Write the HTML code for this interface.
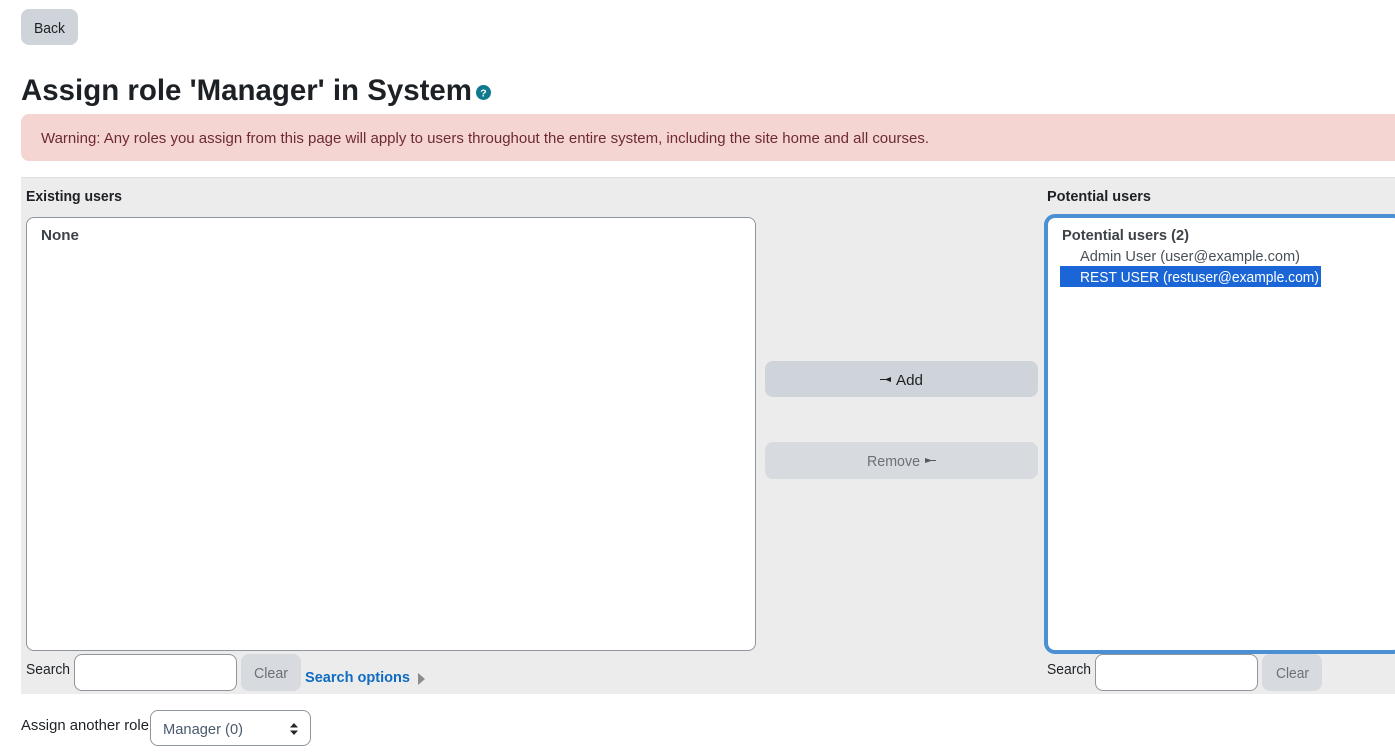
<!DOCTYPE html>
<html><head><meta charset="utf-8"><title>Assign role</title>
<style>
html,body{margin:0;padding:0;width:1395px;height:753px;overflow:hidden;background:#fff}
.b{position:absolute;box-sizing:border-box}
svg{position:absolute;left:0;top:0}
text{font-family:"Liberation Sans",sans-serif;font-size:15px;fill:#1d2125}
.bd{font-weight:700}
</style></head><body>
<div class="b" style="left:21px;top:9px;width:57px;height:36px;background:#ced4da;border-radius:8px"></div>
<div class="b" style="left:21px;top:114px;width:1374px;height:47px;background:#f5d5d1;border-radius:8px 0 0 8px"></div>
<div class="b" style="left:21px;top:177px;width:1374px;height:517px;background:#ececec;border-top:1px solid #dedede"></div>
<div class="b" style="left:26px;top:217px;width:730px;height:434px;background:#fff;border:1px solid #8f959e;border-radius:8px"></div>
<div class="b" style="left:1044px;top:214px;width:360px;height:440px;background:#fff;border:4px solid #4a90d3;border-radius:11px"></div>
<div class="b" style="left:1060px;top:266px;width:261px;height:21px;background:#1a66d6"></div>
<div class="b" style="left:765px;top:361px;width:273px;height:36px;background:#ced4da;border-radius:8px"></div>
<div class="b" style="left:765px;top:442px;width:273px;height:37px;background:#d7dbe0;border-radius:8px"></div>
<div class="b" style="left:74px;top:654px;width:163px;height:37px;background:#fff;border:1px solid #8f959e;border-radius:8px"></div>
<div class="b" style="left:241px;top:654px;width:60px;height:37px;background:#d7dbe0;border-radius:8px"></div>
<div class="b" style="left:1095px;top:654px;width:163px;height:37px;background:#fff;border:1px solid #8f959e;border-radius:8px"></div>
<div class="b" style="left:1262px;top:654px;width:60px;height:37px;background:#d7dbe0;border-radius:8px"></div>
<div class="b" style="left:150px;top:710px;width:161px;height:36px;background:#fff;border:1px solid #8f959e;border-radius:8px"></div>
<svg width="1395" height="753" viewBox="0 0 1395 753">
<text x="34" y="33" textLength="31" lengthAdjust="spacingAndGlyphs">Back</text>
<text x="21" y="100" class="bd" style="font-size:30px" textLength="451" lengthAdjust="spacingAndGlyphs">Assign role 'Manager' in System</text>
<circle cx="483.500" cy="92.500" r="7.500" fill="#0f7a8e"/>
<text x="483.500" y="96.500" class="bd" style="font-size:10.500px;fill:#fff" text-anchor="middle">?</text>
<text x="41" y="143" style="fill:#6e2a33" textLength="888" lengthAdjust="spacingAndGlyphs">Warning: Any roles you assign from this page will apply to users throughout the entire system, including the site home and all courses.</text>
<text x="26" y="201" class="bd" textLength="96" lengthAdjust="spacingAndGlyphs">Existing users</text>
<text x="1047" y="201" class="bd" textLength="104" lengthAdjust="spacingAndGlyphs">Potential users</text>
<text x="41" y="240" class="bd" style="fill:#3d4248" textLength="38" lengthAdjust="spacingAndGlyphs">None</text>
<text x="1062" y="240" class="bd" style="fill:#3d4248" textLength="127" lengthAdjust="spacingAndGlyphs">Potential users (2)</text>
<text x="1080" y="261" style="fill:#495057" textLength="220" lengthAdjust="spacingAndGlyphs">Admin User (user@example.com)</text>
<text x="1080" y="282" style="fill:#fff" textLength="239" lengthAdjust="spacingAndGlyphs">REST USER (restuser@example.com)</text>
<path d="M880 379h6l5-2v5l-5-2h-6z" fill="#1d2125"/>
<text x="896" y="385" textLength="27" lengthAdjust="spacingAndGlyphs">Add</text>
<text x="867" y="466" style="fill:#6c7177" textLength="53" lengthAdjust="spacingAndGlyphs">Remove</text>
<path d="M925 458l6 2h5v1h-5l-6 2z" fill="#555a60"/>
<text x="26" y="674" textLength="44" lengthAdjust="spacingAndGlyphs">Search</text>
<text x="254" y="678" style="fill:#6c7177" textLength="34" lengthAdjust="spacingAndGlyphs">Clear</text>
<text x="305" y="682" class="bd" style="fill:#0f6cbf" textLength="105" lengthAdjust="spacingAndGlyphs">Search options</text>
<path d="M418 673l7 6-7 6z" fill="#8a8d90"/>
<text x="1047" y="674" textLength="44" lengthAdjust="spacingAndGlyphs">Search</text>
<text x="1276" y="678" style="fill:#6c7177" textLength="33" lengthAdjust="spacingAndGlyphs">Clear</text>
<text x="21" y="730" textLength="128" lengthAdjust="spacingAndGlyphs">Assign another role</text>
<text x="163" y="734" style="fill:#495a6e" textLength="80" lengthAdjust="spacingAndGlyphs">Manager (0)</text>
<path d="M290 727.500l4-4.500 4 4.500zM290 730.500h8l-4 4.500z" fill="#23272b"/>
</svg>
</body></html>
